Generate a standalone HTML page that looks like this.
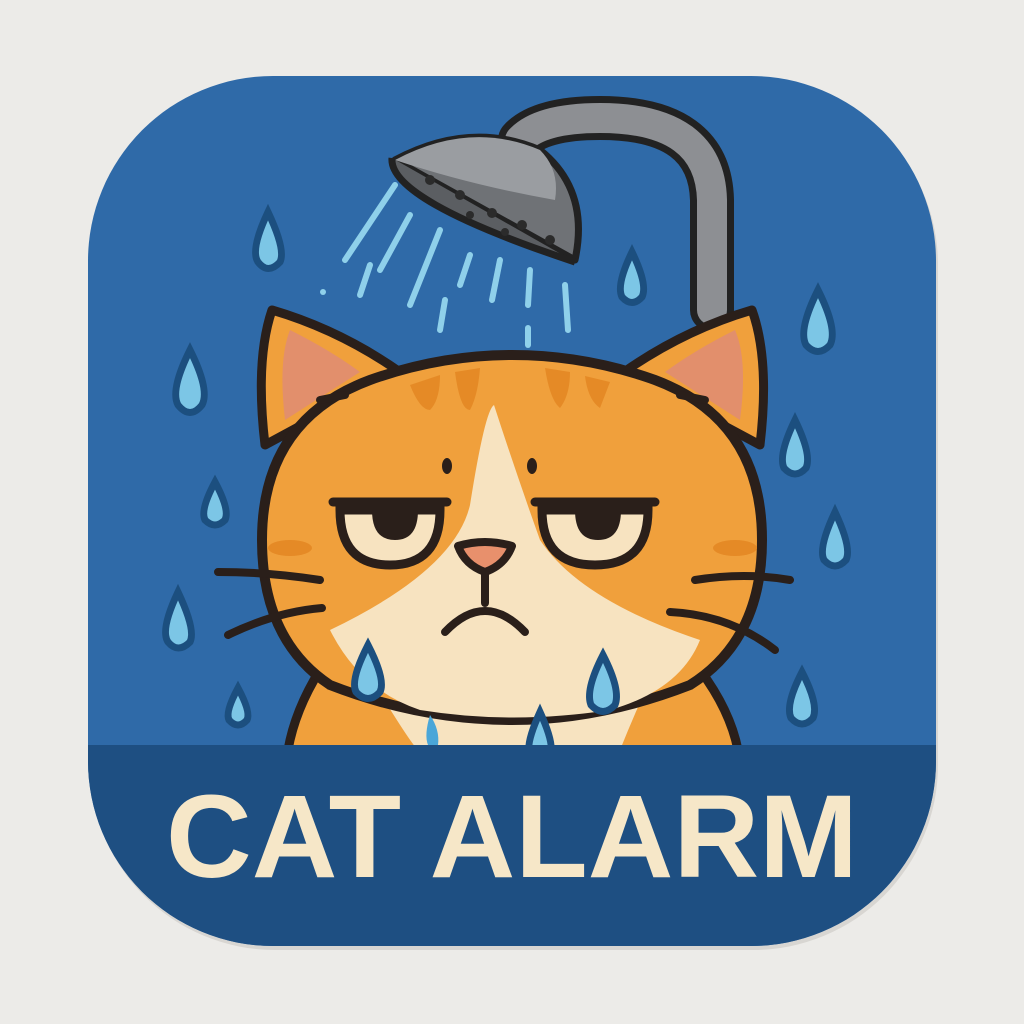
<!DOCTYPE html>
<html><head><style>
html,body{margin:0;padding:0;background:#ecebe8;}
svg{display:block}
</style></head><body>
<svg width="1024" height="1024" viewBox="0 0 1024 1024" xmlns="http://www.w3.org/2000/svg">
<rect width="1024" height="1024" fill="#ecebe8"/>
<defs><clipPath id="c"><rect x="88" y="76" width="848" height="870" rx="185"/></clipPath></defs>
<rect x="90" y="80" width="848" height="870" rx="185" fill="#d8d6d2"/>
<g clip-path="url(#c)">
<rect x="88" y="76" width="848" height="870" fill="#2f6aa8"/>
<g stroke="#8fd0ea" stroke-width="6" stroke-linecap="round" fill="none">
<line x1="395" y1="185" x2="345" y2="260"/><line x1="410" y1="215" x2="380" y2="270"/>
<line x1="370" y1="265" x2="360" y2="295"/><line x1="440" y1="230" x2="410" y2="305"/>
<line x1="470" y1="255" x2="460" y2="285"/><line x1="500" y1="260" x2="492" y2="300"/>
<line x1="530" y1="270" x2="528" y2="305"/><line x1="565" y1="285" x2="568" y2="330"/>
<line x1="445" y1="300" x2="440" y2="330"/><line x1="528" y1="328" x2="528" y2="345"/>
<circle cx="323" cy="292" r="3" fill="#8fd0ea" stroke="none"/>
</g>
<path d="M520 140 Q540 118 600 118 Q710 118 712 200 L712 310" fill="none" stroke="#222" stroke-width="44" stroke-linecap="round"/>
<path d="M520 140 Q540 118 600 118 Q710 118 712 200 L712 310" fill="none" stroke="#8d8f93" stroke-width="30" stroke-linecap="round"/>
<path d="M395 160 Q470 120 540 150 Q590 190 575 260 Z" fill="#6f7276" stroke="#222" stroke-width="7" stroke-linejoin="round"/>
<path d="M395 160 Q470 120 540 150 Q560 170 555 200 Q470 185 395 160Z" fill="#9a9da1"/>
<path d="M392 158 Q388 200 575 262" fill="#5b5e62" stroke="#222" stroke-width="7"/>
<g fill="#2b2b2b"><circle cx="430" cy="180" r="5"/><circle cx="460" cy="195" r="5"/><circle cx="492" cy="213" r="5"/><circle cx="522" cy="225" r="5"/><circle cx="550" cy="240" r="5"/><circle cx="470" cy="215" r="4"/><circle cx="505" cy="232" r="4"/></g>
<g fill="#7cc6e6" stroke="#1c4f7f" stroke-width="7">
<path d="M268 212 Q250 250 258 262 Q268 275 280 262 Q286 250 268 212Z"/>
<path d="M632 252 Q616 285 622 297 Q632 308 642 297 Q648 285 632 252Z"/>
<path d="M818 290 Q798 330 806 345 Q818 358 830 345 Q838 330 818 290Z"/>
<path d="M190 350 Q170 390 178 405 Q190 420 202 405 Q210 390 190 350Z"/>
<path d="M795 420 Q778 455 784 468 Q795 480 806 468 Q812 455 795 420Z"/>
<path d="M215 482 Q200 510 205 520 Q215 530 225 520 Q230 510 215 482Z"/>
<path d="M835 512 Q818 548 824 560 Q835 572 846 560 Q852 548 835 512Z"/>
<path d="M178 592 Q160 630 168 642 Q178 654 190 642 Q196 630 178 592Z"/>
<path d="M238 688 Q225 712 229 720 Q238 730 247 720 Q251 712 238 688Z"/>
<path d="M802 672 Q785 705 791 718 Q802 730 813 718 Q819 705 802 672Z"/>
</g>
<path d="M320 670 Q295 710 288 750 L738 750 Q730 710 700 670Z" fill="#f0a03c" stroke="#2a1f1a" stroke-width="9"/>
<path d="M360 660 Q420 760 420 750 L620 750 Q640 700 660 660Z" fill="#f7e3c0"/>
<path d="M265 445 Q255 360 272 310 Q340 330 400 372Z" fill="#f0a03c" stroke="#2a1f1a" stroke-width="9" stroke-linejoin="round"/>
<path d="M285 420 Q278 360 290 330 Q330 350 360 372Z" fill="#e28f6c"/>
<path d="M760 445 Q770 360 752 310 Q684 330 624 372Z" fill="#f0a03c" stroke="#2a1f1a" stroke-width="9" stroke-linejoin="round"/>
<path d="M740 420 Q748 360 735 330 Q695 350 665 372Z" fill="#e28f6c"/>
<path d="M330 685 Q262 640 262 540 Q262 420 370 380 Q440 355 512 355 Q585 355 655 380 Q762 420 762 540 Q762 640 690 685 Q600 720 512 720 Q420 720 330 685Z" fill="#f0a03c" stroke="#2a1f1a" stroke-width="10"/>
<g fill="#e58a26"><path d="M410 385 Q420 410 430 410 Q440 400 440 375Z"/><path d="M455 372 Q460 410 470 410 Q478 395 480 368Z"/><path d="M545 368 Q550 400 560 408 Q570 395 570 372Z"/><path d="M585 376 Q588 400 600 408 Q605 395 610 382Z"/>
<ellipse cx="290" cy="548" rx="22" ry="8"/><ellipse cx="735" cy="548" rx="22" ry="8"/></g>
<path d="M494 405 Q485 410 470 505 Q455 570 330 630 Q360 690 420 710 Q512 725 610 710 Q680 690 700 640 Q580 600 540 540 Q515 470 494 405Z" fill="#f7e3c0"/>
<g stroke="#2a1f1a" stroke-width="9" stroke-linecap="round">
<line x1="333" y1="502" x2="447" y2="502"/><line x1="535" y1="502" x2="655" y2="502"/>
<path d="M340 510 Q340 565 390 565 Q440 565 440 510Z" fill="#f7e3c0"/>
<path d="M542 510 Q542 565 595 565 Q648 565 648 510Z" fill="#f7e3c0"/>
</g>
<path d="M372 510 Q372 540 395 540 Q418 540 418 510Z" fill="#2a1f1a"/>
<path d="M575 510 Q575 540 598 540 Q621 540 621 510Z" fill="#2a1f1a"/>
<ellipse cx="447" cy="466" rx="5" ry="8" fill="#2a1f1a"/><ellipse cx="532" cy="466" rx="5" ry="8" fill="#2a1f1a"/>
<path d="M458 546 Q485 538 512 546 Q505 565 485 572 Q465 565 458 546Z" fill="#e8906c" stroke="#2a1f1a" stroke-width="8" stroke-linejoin="round"/>
<g stroke="#2a1f1a" stroke-width="8" stroke-linecap="round" fill="none">
<path d="M485 572 L485 603"/><path d="M445 632 Q485 590 525 632"/>
<path d="M218 572 Q270 572 320 580"/><path d="M228 635 Q275 612 322 608"/>
<path d="M695 580 Q745 572 790 580"/><path d="M670 612 Q730 615 775 650"/>
<path d="M320 400 L345 395"/><path d="M705 400 L680 395"/>
</g>
<g fill="#7cc6e6" stroke="#1c4f7f" stroke-width="7">
<path d="M368 645 Q350 680 356 692 Q368 705 380 692 Q386 680 368 645Z"/>
<path d="M603 655 Q585 690 591 705 Q603 718 615 705 Q621 690 603 655Z"/>
<path d="M540 712 Q525 745 530 755 Q540 765 550 755 Q555 745 540 712Z"/>
</g>
<path d="M430 715 Q424 735 428 745 L438 745 Q440 730 430 715Z" fill="#4aa6d8"/>
<rect x="80" y="745" width="870" height="210" fill="#1e4f82"/>
<text x="512" y="877" text-anchor="middle" font-family="Liberation Sans, sans-serif" font-weight="bold" font-size="118" fill="#f6e7c8" textLength="692" lengthAdjust="spacingAndGlyphs">CAT ALARM</text>
</g>
</svg>
</body></html>
